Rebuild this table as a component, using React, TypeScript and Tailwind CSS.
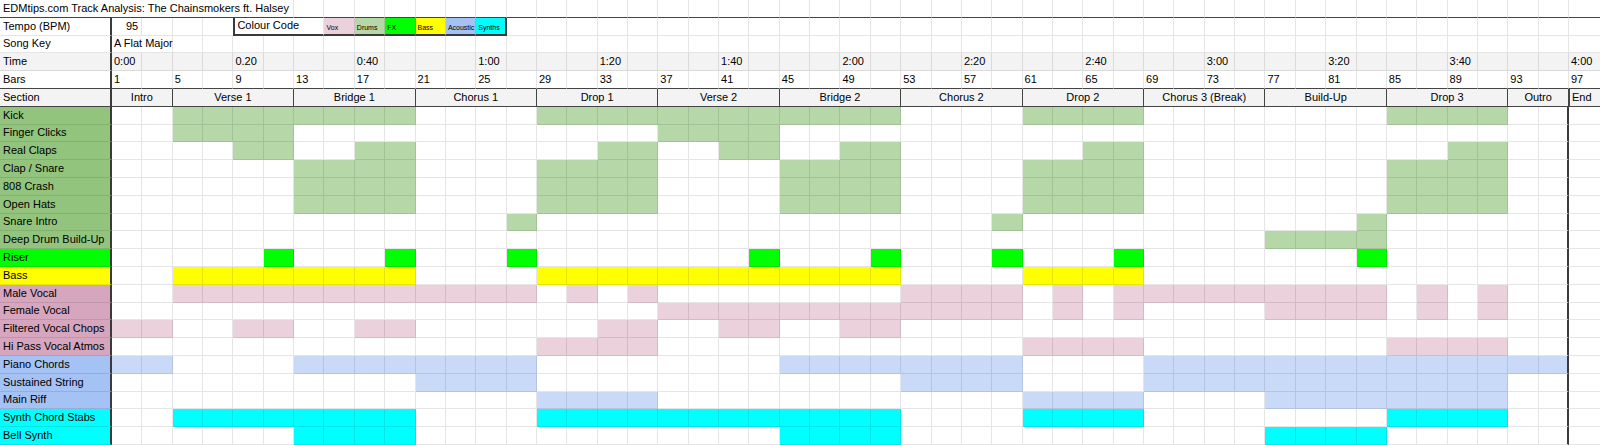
const GRID = "grid grid-cols-[112px_repeat(48,minmax(0,1fr))_31px] h-[17.8px]";
const LINE = "border-r border-b border-black/10";
const LABEL = "border-b border-black/10 border-r-2 border-r-[#3a3a3a] pl-[3px] flex items-center whitespace-nowrap";

type Group = "drums" | "fx" | "bass" | "vox" | "ac" | "syn";

const palette: Record<Group, { label: string; cell: string }> = {
  drums: { label: "bg-[#93c47d]", cell: "bg-[#b6d7a8]" },
  fx: { label: "bg-[#00ff00]", cell: "bg-[#00ff00]" },
  bass: { label: "bg-[#ffff00]", cell: "bg-[#ffff00]" },
  vox: { label: "bg-[#d5a6bd]", cell: "bg-[#ead1dc]" },
  ac: { label: "bg-[#a4c2f4]", cell: "bg-[#c9daf8]" },
  syn: { label: "bg-[#00ffff]", cell: "bg-[#00ffff]" },
};

const drumHits: [number, number][] = [[6, 9], [14, 17], [22, 25], [30, 33], [42, 45]];

const tracks: { name: string; g: Group; on: [number, number][] }[] = [
  { name: "Kick", g: "drums", on: [[2, 9], [14, 25], [30, 33], [42, 45]] },
  { name: "Finger Clicks", g: "drums", on: [[2, 5], [18, 21]] },
  { name: "Real Claps", g: "drums", on: [[4, 5], [8, 9], [16, 17], [20, 21], [24, 25], [32, 33], [44, 45]] },
  { name: "Clap / Snare", g: "drums", on: drumHits },
  { name: "808 Crash", g: "drums", on: drumHits },
  { name: "Open Hats", g: "drums", on: drumHits },
  { name: "Snare Intro", g: "drums", on: [[13, 13], [29, 29], [41, 41]] },
  { name: "Deep Drum Build-Up", g: "drums", on: [[38, 41]] },
  { name: "Riser", g: "fx", on: [[5, 5], [9, 9], [13, 13], [21, 21], [25, 25], [29, 29], [33, 33], [41, 41]] },
  { name: "Bass", g: "bass", on: [[2, 9], [14, 25], [30, 33]] },
  { name: "Male Vocal", g: "vox", on: [[2, 13], [15, 15], [17, 17], [26, 29], [31, 31], [33, 41], [43, 43], [45, 45]] },
  { name: "Female Vocal", g: "vox", on: [[18, 29], [31, 31], [33, 33], [38, 41], [43, 43], [45, 45]] },
  { name: "Filtered Vocal Chops", g: "vox", on: [[0, 1], [4, 5], [8, 9], [16, 17], [20, 21], [24, 25]] },
  { name: "Hi Pass Vocal Atmos", g: "vox", on: [[14, 17], [30, 33], [42, 45]] },
  { name: "Piano Chords", g: "ac", on: [[0, 1], [6, 13], [22, 29], [34, 47]] },
  { name: "Sustained String", g: "ac", on: [[10, 13], [26, 29], [34, 45]] },
  { name: "Main Riff", g: "ac", on: [[14, 17], [30, 33], [38, 45]] },
  { name: "Synth Chord Stabs", g: "syn", on: [[2, 9], [14, 25], [30, 33], [42, 45]] },
  { name: "Bell Synth", g: "syn", on: [[6, 9], [22, 25], [38, 41]] },
];

const sections = [
  { name: "Intro", span: 2 },
  { name: "Verse 1", span: 4 },
  { name: "Bridge 1", span: 4 },
  { name: "Chorus 1", span: 4 },
  { name: "Drop 1", span: 4 },
  { name: "Verse 2", span: 4 },
  { name: "Bridge 2", span: 4 },
  { name: "Chorus 2", span: 4 },
  { name: "Drop 2", span: 4 },
  { name: "Chorus 3 (Break)", span: 4 },
  { name: "Build-Up", span: 4 },
  { name: "Drop 3", span: 4 },
  { name: "Outro", span: 2 },
];

const legend = [
  { name: "Vox", bg: "bg-[#ead1dc]" },
  { name: "Drums", bg: "bg-[#b6d7a8]" },
  { name: "FX", bg: "bg-[#00ff00]" },
  { name: "Bass", bg: "bg-[#ffff00]" },
  { name: "Acoustic", bg: "bg-[#a4c2f4]" },
  { name: "Synths", bg: "bg-[#00ffff]" },
];

const times = ["0:00", "0.20", "0:40", "1:00", "1:20", "1:40", "2:00", "2:20", "2:40", "3:00", "3:20", "3:40"];
const cols = Array.from({ length: 48 }, (_, i) => i);

const isOn = (on: [number, number][], c: number) => on.some(([a, b]) => c >= a && c <= b);

export default function App() {
  return (
    <div className="w-[1600px] h-[445px] overflow-hidden bg-white text-black text-[11px] leading-none font-['Liberation_Sans',Arial,sans-serif]">
      {/* title */}
      <div className={GRID}>
        <div className="col-span-7 border-r border-black/10 border-b border-b-[#444] pl-[3px] flex items-center whitespace-nowrap">
          EDMtips.com Track Analysis: The Chainsmokers ft. Halsey
        </div>
        {cols.slice(6).map((c) => (
          <div key={c} className="border-r border-black/10 border-b border-b-[#444]" />
        ))}
        <div className="border-b border-b-[#444]" />
      </div>

      {/* tempo + colour code */}
      <div className={GRID}>
        <div className={LABEL}>Tempo (BPM)</div>
        <div className={`${LINE} pl-[14px] flex items-center`}>95</div>
        <div className={LINE} />
        <div className={LINE} />
        <div className="border-b border-black/10" />
        <div className="col-span-3 border-l-2 border-l-[#3a3a3a] border-b-2 border-b-[#3a3a3a] border-r border-r-black/10 pl-[2px] flex items-center whitespace-nowrap">
          Colour Code
        </div>
        {legend.map((l, i) => (
          <div
            key={l.name}
            className={`${l.bg} border-b-2 border-b-[#3a3a3a] ${i === legend.length - 1 ? "border-r-2 border-r-[#3a3a3a]" : "border-r border-r-black/10"} text-[7px] pl-[2px] pb-[3px] flex items-end whitespace-nowrap overflow-hidden`}
          >
            {l.name}
          </div>
        ))}
        {cols.slice(13).map((c) => (
          <div key={c} className={LINE} />
        ))}
        <div className="border-b border-black/10" />
      </div>

      {/* song key */}
      <div className={GRID}>
        <div className={LABEL}>Song Key</div>
        <div className={`col-span-2 ${LINE} pl-[2px] flex items-center whitespace-nowrap`}>A Flat Major</div>
        {cols.slice(2).map((c) => (
          <div key={c} className={LINE} />
        ))}
        <div className="border-b border-black/10" />
      </div>

      {/* time */}
      <div className={`${GRID} bg-[#f3f3f3]`}>
        <div className={LABEL}>Time</div>
        {cols.map((c) => (
          <div key={c} className={`${LINE} pl-[2px] flex items-center whitespace-nowrap`}>
            {c % 4 === 0 ? times[c / 4] : ""}
          </div>
        ))}
        <div className="border-b border-black/10 pl-[2px] flex items-center">4:00</div>
      </div>

      {/* bars */}
      <div className={GRID}>
        <div className="border-b border-b-[#444] border-r-2 border-r-[#3a3a3a] pl-[3px] flex items-center">Bars</div>
        {cols.map((c) => (
          <div key={c} className="border-r border-black/10 border-b border-b-[#444] pl-[2px] flex items-center">
            {c % 2 === 0 ? 1 + c * 2 : ""}
          </div>
        ))}
        <div className="border-b border-b-[#444] pl-[2px] flex items-center">97</div>
      </div>

      {/* sections */}
      <div className={`${GRID} bg-[#f3f3f3]`}>
        <div className="border-b border-b-[#444] border-r-2 border-r-[#3a3a3a] pl-[3px] flex items-center">Section</div>
        {sections.map((s) => (
          <div
            key={s.name}
            className={`${s.span === 2 ? "col-span-2" : "col-span-4"} border-r border-b border-[#444] flex items-center justify-center whitespace-nowrap`}
          >
            {s.name}
          </div>
        ))}
        <div className="border-b border-b-[#444] border-l border-l-[#444] pl-[2px] flex items-center">End</div>
      </div>

      {/* tracks */}
      {tracks.map((t) => (
        <div key={t.name} className={GRID}>
          <div className={`${LABEL} ${palette[t.g].label}`}>{t.name}</div>
          {cols.map((c) => (
            <div
              key={c}
              className={`border-b border-black/10 ${c === 47 ? "border-r-2 border-r-[#3a3a3a]" : "border-r"} ${isOn(t.on, c) ? palette[t.g].cell : ""}`}
            />
          ))}
          <div className="border-b border-black/10" />
        </div>
      ))}
    </div>
  );
}
